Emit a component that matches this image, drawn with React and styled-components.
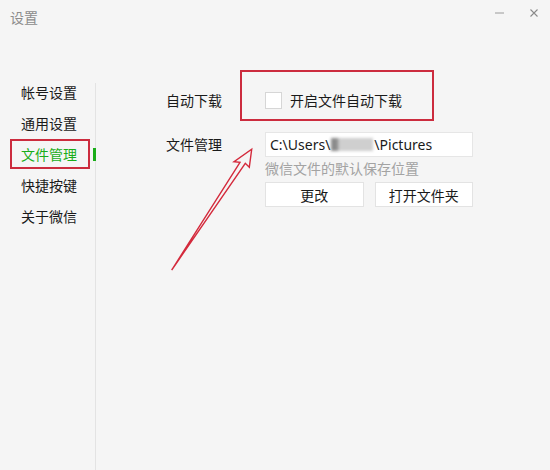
import React from 'react'
import styled, { createGlobalStyle } from 'styled-components'

const GlobalStyle = createGlobalStyle`
  body {
    margin: 0;
    background: #f5f5f5;
    font-family: "Noto Sans CJK SC", "Noto Sans", sans-serif;
  }
`

const Window = styled.div`
  position: relative;
  width: 550px;
  height: 470px;
  background: #f5f5f5;
  color: #222;
  overflow: hidden;
`

const TitleBar = styled.div`
  height: 36px;
  display: flex;
  align-items: center;
  justify-content: space-between;
  padding: 0 12px 0 10px;
  box-sizing: border-box;
`

const Title = styled.span`
  font-size: 14px;
  color: #8c8c8c;
  line-height: 36px;
  margin-top: -2px;
`

const Controls = styled.div`
  display: flex;
  align-items: center;
  gap: 26px;
  margin-top: -10px;
`

const Body = styled.div`
  display: flex;
  height: 434px;
`

const Sidebar = styled.nav`
  position: relative;
  width: 96px;
  padding-top: 41px;
  box-sizing: border-box;

  &::after {
    content: '';
    position: absolute;
    right: 0;
    top: 47px;
    bottom: 0;
    width: 1px;
    background: #e3e3e3;
  }
`

const NavItem = styled.div`
  position: relative;
  height: 31px;
  line-height: 31px;
  padding-left: 21px;
  font-size: 14px;
  color: ${({ active }) => (active ? '#1aad19' : '#1a1a1a')};

  &::after {
    content: '';
    display: ${({ active }) => (active ? 'block' : 'none')};
    position: absolute;
    right: 0;
    top: 9px;
    width: 3px;
    height: 13px;
    background: #1aad19;
    z-index: 1;
  }
`

const Highlight = styled.span`
  position: absolute;
  left: ${({ l }) => l}px;
  top: ${({ t }) => t}px;
  right: ${({ r }) => r}px;
  bottom: ${({ b }) => b}px;
  border: 2px solid #cc2c3e;
  pointer-events: none;
`

const Main = styled.div`
  flex: 1;
  padding: 51px 0 0 70px;
  display: flex;
  flex-direction: column;
  gap: 19px;
`

const Row = styled.div`
  display: grid;
  grid-template-columns: 99px 208px;
  align-items: ${({ top }) => (top ? 'start' : 'center')};
`

const Label = styled.div`
  font-size: 14px;
  line-height: ${({ tall }) => (tall ? '25px' : '26px')};
  color: #1a1a1a;
`

const CheckRow = styled.label`
  position: relative;
  height: 26px;
  display: flex;
  align-items: center;
  gap: 8px;
  font-size: 14px;
  color: #1a1a1a;
`

const Box = styled.span`
  width: 15px;
  height: 15px;
  background: #fff;
  border: 1px solid #d6d6d6;
`

const Field = styled.div`
  display: flex;
  flex-direction: column;
`

const PathInput = styled.div`
  height: 25px;
  box-sizing: border-box;
  background: #fff;
  border: 1px solid #e6e6e6;
  padding-left: 4px;
  display: flex;
  align-items: center;
  font-family: "Noto Sans", "Noto Sans CJK SC", sans-serif;
  font-size: 14px;
  color: #1a1a1a;
  white-space: nowrap;
`

const Blur = styled.span`
  display: inline-block;
  width: 42px;
  height: 13px;
  margin: 0 1px;
  background: linear-gradient(90deg, #8a8a8a 0 14%, #cfcfcf 20% 100%);
  filter: blur(1.5px);
`

const Hint = styled.div`
  margin-top: 1px;
  font-size: 14px;
  line-height: 20px;
  color: #a3a3a3;
`

const Buttons = styled.div`
  margin-top: 4px;
  display: flex;
  gap: 11px;
`

const Button = styled.button`
  width: 99px;
  height: 25px;
  padding: 0;
  background: #fff;
  border: 1px solid #e3e3e3;
  font-family: "Noto Sans CJK SC", sans-serif;
  font-size: 14px;
  color: #1a1a1a;
`

const Arrow = styled.svg`
  position: absolute;
  left: 160px;
  top: 140px;
  pointer-events: none;
`

const navItems = ['帐号设置', '通用设置', '文件管理', '快捷按键', '关于微信']

export default function App() {
  return (
    <>
      <GlobalStyle />
      <Window>
        <TitleBar>
          <Title>设置</Title>
          <Controls>
            <svg width="9" height="2" viewBox="0 0 9 2">
              <line x1="0" y1="1" x2="9" y2="1" stroke="#9a9a9a" strokeWidth="1" />
            </svg>
            <svg width="8" height="8" viewBox="0 0 8 8">
              <path d="M0.5 0.5 L7.5 7.5 M7.5 0.5 L0.5 7.5" stroke="#8a8a8a" strokeWidth="1.1" />
            </svg>
          </Controls>
        </TitleBar>
        <Body>
          <Sidebar>
            {navItems.map((item) => (
              <NavItem key={item} active={item === '文件管理'}>
                {item}
                {item === '文件管理' && <Highlight l={10} r={6} t={0} b={1} />}
              </NavItem>
            ))}
          </Sidebar>
          <Main>
            <Row>
              <Label>自动下载</Label>
              <CheckRow>
                <Box />
                开启文件自动下载
                <Highlight l={-25} r={39} t={-17} b={-8} />
              </CheckRow>
            </Row>
            <Row top>
              <Label tall>文件管理</Label>
              <Field>
                <PathInput>
                  C:\Users\<Blur />\Pictures
                </PathInput>
                <Hint>微信文件的默认保存位置</Hint>
                <Buttons>
                  <Button>更改</Button>
                  <Button>打开文件夹</Button>
                </Buttons>
              </Field>
            </Row>
          </Main>
        </Body>
        <Arrow width="100" height="140" viewBox="0 0 100 140">
          <path
            d="M11.7 130 L80 22.3 L74 21.7 L91.7 9.3 L89.3 27.3 L85.3 23.3 Z"
            fill="none"
            stroke="#d42a3c"
            strokeWidth="1.4"
            strokeLinejoin="miter"
          />
        </Arrow>
      </Window>
    </>
  )
}
